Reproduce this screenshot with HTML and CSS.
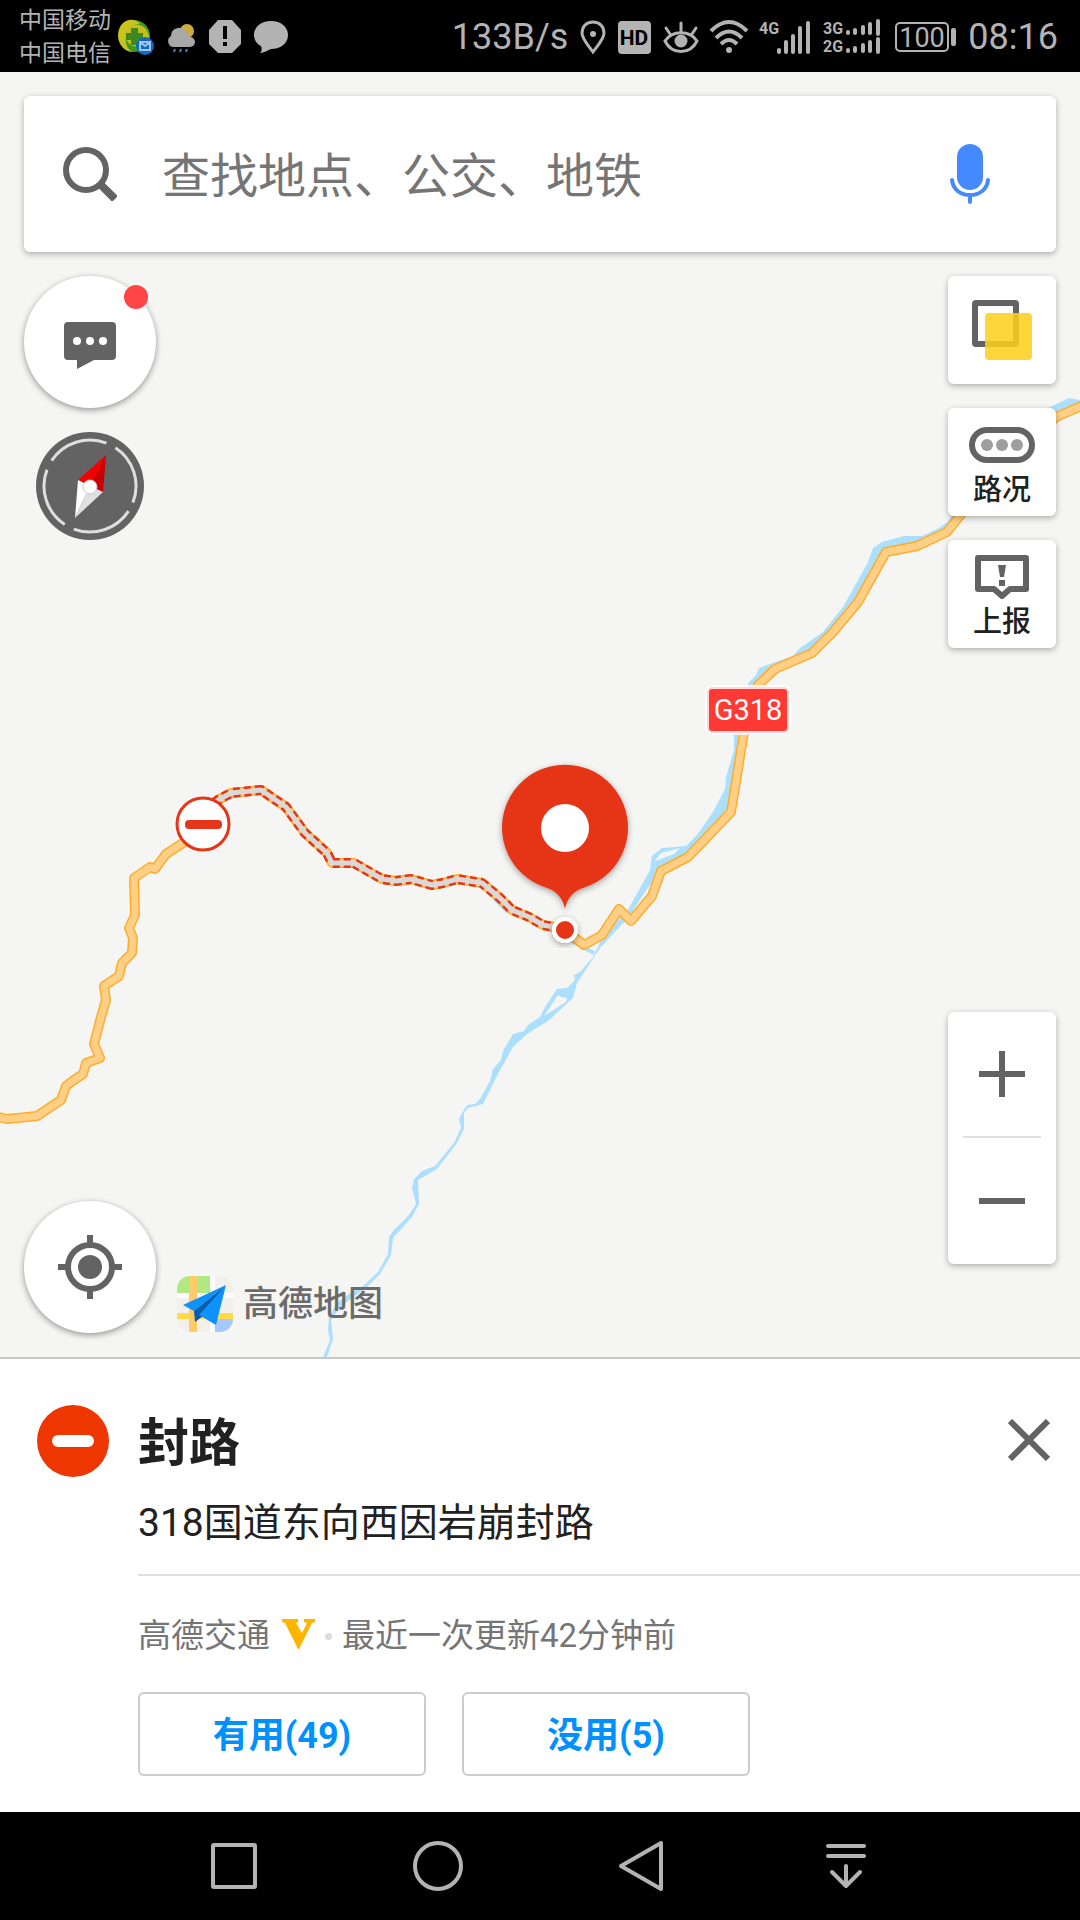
FILE: index.html
```
<!DOCTYPE html>
<html lang="zh-CN">
<head>
<meta charset="utf-8">
<meta name="viewport" content="width=device-width, initial-scale=1">
<title>高德地图</title>
<link rel="stylesheet" href="styles.css">
</head>
<body>
<header class="status">
  <div class="carriers"><span>中国移动</span><span>中国电信</span></div>
  <div class="notices">
    <svg width="36" height="36" viewBox="0 0 36 36">
      <circle cx="16" cy="17" r="16" fill="#3f9a22"/>
      <path d="M2 8C7-1 17-1 22 5C14 4 6 12 8 24C9 29 12 32 15 33C3 33-3 18 2 8Z" fill="#c9c41c"/>
      <path d="M10 8C20 2 30 8 31 18C30 26 22 30 13 26C6 21 5 13 10 8Z" fill="#c6bd20"/>
      <path d="M13 9h7v5h5v7h-5v5h-7v-5H8v-7h5Z" fill="#3a8a20"/>
      <circle cx="27" cy="27" r="9" fill="#1468c0"/>
      <path d="M22 23h10v8H22ZM22 23l5 4 5-4" fill="none" stroke="#9cc6f0" stroke-width="2"/>
    </svg>
    <svg width="30" height="36" viewBox="0 0 30 36">
      <circle cx="21" cy="12" r="7" fill="#cfac3a"/>
      <path d="M7 28a6 6 0 0 1-2-11a8 8 0 0 1 15-4a6 6 0 0 1 4 5a5 5 0 0 1 0 10Z" fill="#a8a8a8"/>
      <path d="M9 30l-1 3M15 30l-1 3M21 30l-1 3" stroke="#3a8fb0" stroke-width="2"/>
    </svg>
    <svg width="34" height="36" viewBox="0 0 34 36">
      <path d="M10 1h14l9 10v14l-9 9H10L1 25V11Z" fill="#b3b3b3"/>
      <path d="M15 7h4v13h-4ZM15 23h4v4h-4Z" fill="#000"/>
    </svg>
    <svg width="34" height="36" viewBox="0 0 34 36">
      <path d="M17 2C27 2 34 8 34 16S27 30 17 30C14 31 10 34 6 34C8 32 8 30 7 27C3 25 0 21 0 16C0 8 7 2 17 2Z" fill="#b3b3b3"/>
    </svg>
  </div>
  <div class="indicators">
    <span class="clock">133B/s</span>
    <svg width="26" height="36" viewBox="0 0 26 36"><path d="M13 3C6 3 2 8 2 14C2 20 8 26 13 33C18 26 24 20 24 14C24 8 20 3 13 3Z" fill="none" stroke="#b3b3b3" stroke-width="3"/><circle cx="13" cy="15" r="3" fill="#b3b3b3"/></svg>
    <svg width="33" height="36" viewBox="0 0 33 36"><rect y="2" width="33" height="33" rx="4" fill="#b3b3b3"/><text x="16" y="26" class="hd">HD</text></svg>
    <svg width="36" height="36" viewBox="0 0 36 36" fill="none" stroke="#b3b3b3" stroke-width="3" stroke-linecap="round"><path d="M2 22C9 11 27 11 34 22C27 36 9 36 2 22ZM18 4v8M3 9l4 6M33 9l-4 6"/><circle cx="18" cy="22" r="5" fill="#b3b3b3"/></svg>
    <svg width="36" height="36" viewBox="0 0 36 36" fill="none" stroke="#b3b3b3" stroke-width="4"><path d="M0 12Q18-6 36 12M5 19Q18 6 31 19M10 25Q18 17 26 25"/><circle cx="18" cy="31" r="3" fill="#b3b3b3" stroke="none"/></svg>
    <svg width="52" height="36" viewBox="0 0 52 36"><text y="15" class="net">4G</text><path d="M20 31v2M27 23v10M34 17v16M41 9v24M49 4v29" stroke="#b3b3b3" stroke-width="4" stroke-linecap="round"/></svg>
    <svg width="60" height="36" viewBox="0 0 60 36"><text y="15" class="net">3G</text><text y="33" class="net">2G</text><path d="M25 13v1M32 11v3M40 8v6M47 5v9M55 2v13M25 31v1M32 29v3M40 26v6M47 23v9M55 20v13" stroke="#b3b3b3" stroke-width="4" stroke-linecap="round"/></svg>
    <svg width="61" height="36" viewBox="0 0 61 36"><rect x="1" y="4" width="52" height="28" rx="4" fill="none" stroke="#b3b3b3" stroke-width="2"/><rect x="56" y="9" width="5" height="18" rx="2" fill="#b3b3b3"/><text x="27" y="28" class="charge">100</text></svg>
    <time class="clock">08:16</time>
  </div>
</header>

<main class="map">
  <svg class="canvas" viewBox="0 72 1080 1285" preserveAspectRatio="xMidYMid slice">
    <defs>
      <filter id="lift" x="-30%" y="-30%" width="160%" height="160%"><feDropShadow dx="0" dy="2" stdDeviation="3" flood-opacity=".35"/></filter>
      <path id="west" d="M-6 1116L7 1119L37 1116L61 1100L66 1086L74 1080L83 1074L86 1063L100 1058L94 1044L101 1017L106 1000L104 986L119 976L122 963L132 953L133 938L129 928L135 915L134 878L150 867L155 869L166 854L186 841L218 800"/>
      <path id="closed" d="M214 803L218 800L231 793L261 790L286 807L305 833L327 853L332 863L354 863L382 879L396 881L411 879L432 885L443 883L457 879L482 883L500 898L512 910L529 917L543 925L564 929"/>
      <path id="east" d="M564 929L584 945L602 935L619 909L631 921L652 896L661 871L688 857L731 812L744 732L758 685L775 669L812 653L833 632L858 602L886 552L917 546L947 532L967 507L1056 417L1086 404"/>
    </defs>
    <g fill="#acdffe">
      <path d="M1048 408L1069 398L1080 400V412L1050 420Z"/>
      <path d="M955 512L947 522L939 528L922 536L904 536L882 542L873 548L868 562L843 607L823 632L800 648L793 656L767 665L759 668L756 675L748 683L750 700L734 732V750L726 777L725 789L713 812L697 835L686 846L662 848L652 856L650 870L629 908L603 936L593 957L580 972L574 975L575 980L567 988L557 989L545 1007L540 1017L528 1025L524 1031L513 1034L503 1051L501 1060L493 1069L490 1081L480 1099L475 1104L467 1105L462 1113L459 1119L461 1128L454 1143L435 1166L422 1171L414 1179L412 1188L416 1204L408 1216L393 1231L389 1237L388 1254L378 1272L363 1286L350 1293L337 1303L329 1317L328 1330L330 1340L323 1357H327L333 1339L331 1320L340 1307L367 1287L380 1274L391 1255L393 1238L412 1217L419 1204L418 1180L437 1169L457 1143L464 1129L464 1113L468 1108L483 1104L499 1072L503 1065L513 1047L527 1034L548 1021L573 998L577 983L600 948L628 918L645 892L661 871L688 857L731 812L744 732L758 685L775 669L812 653L833 632L858 602L886 552L917 546L947 532Z"/>
    </g>
    <path d="M654 862L661 853L680 848L674 854L653 862ZM544 1016L558 995L561 997L567 998L566 1002Z" fill="#f5f6f4"/>
    <path d="M398 883L411 883M494 898L508 912M566 938L594 953" fill="none" stroke="#acdffe" stroke-width="4"/>
    <g fill="none" stroke-linejoin="round">
      <g stroke="#ffac2c" stroke-width="10"><use href="#west"/><use href="#closed"/><use href="#east"/></g>
      <g stroke="#ffcf86" stroke-width="7"><use href="#west"/><use href="#closed"/><use href="#east"/></g>
      <use href="#closed" stroke="#e63519" stroke-width="10" stroke-dasharray="7 4"/>
      <use href="#closed" stroke="#d9d9d9" stroke-width="5"/>
    </g>
    <circle cx="203" cy="824" r="26" fill="#fff" stroke="#e63519" stroke-width="3"/>
    <rect x="185" y="820" width="37" height="9" rx="4" fill="#e63519"/>
    <path filter="url(#lift)" fill="#e63519" d="M565 909C563 898 556 891 547 888A63 63 0 1 1 583 888C574 891 567 898 565 909Z"/>
    <circle cx="565" cy="828" r="24" fill="#fff"/>
    <circle cx="565" cy="930" r="11" fill="#e63519" stroke="#fff" stroke-width="4" filter="url(#lift)"/>
    <rect x="707" y="687" width="82" height="46" rx="5" fill="#ff3a34" stroke="#fff" stroke-opacity=".8" stroke-width="4"/>
    <text x="748" y="720" class="route">G318</text>
  </svg>

  <div class="overlay">
    <form class="search">
      <svg width="54" height="54" viewBox="0 0 54 54" fill="none" stroke="#636363"><circle cx="23" cy="23" r="20" stroke-width="6"/><path d="M38 38L52 52" stroke-width="8"/></svg>
      <input type="text" aria-label="查找地点" placeholder="查找地点、公交、地铁">
      <button type="button" class="plain" aria-label="语音"><svg width="42" height="60" viewBox="0 0 42 60"><rect x="8" width="26" height="46" rx="13" fill="#4489ff"/><path d="M3 36C4 46 12 51 21 51S38 46 39 36M21 51V58" fill="none" stroke="#4489ff" stroke-width="4" stroke-linecap="round"/></svg></button>
    </form>

    <div class="tools">
      <div class="stack">
        <button type="button" class="round" aria-label="消息">
          <svg width="54" height="56" viewBox="0 -8 54 56"><path d="M5 0H49a4 4 0 0 1 4 4V34a4 4 0 0 1-4 4H31L14 47V38H5a4 4 0 0 1-4-4V4a4 4 0 0 1 4-4Z" fill="#636363"/><g fill="#fff"><circle cx="14" cy="19" r="4"/><circle cx="27" cy="19" r="4"/><circle cx="40" cy="19" r="4"/></g></svg>
          <span class="badge"></span>
        </button>
        <button type="button" class="plain" aria-label="指南针">
          <svg width="108" height="108" viewBox="0 0 108 108"><circle cx="54" cy="54" r="54" fill="#636363"/><g transform="rotate(27 54 54)"><circle cx="54" cy="54" r="46" fill="none" stroke="#dedede" stroke-width="3" stroke-dasharray="62 10.26" stroke-dashoffset="-5"/></g><path d="M70 23L42 48L54 54Z" fill="#f40000"/><path d="M70 23L67 60L54 54Z" fill="#cc0000"/><path d="M42 48L39 86L54 54Z" fill="#fff"/><path d="M67 60L39 86L54 54Z" fill="#e0e0e0"/><circle cx="54" cy="55" r="7" fill="#fff" stroke="#ccc" stroke-width="1"/></svg>
        </button>
      </div>
      <div class="stack">
        <button type="button" class="tile" aria-label="图层"><svg width="60" height="60" viewBox="0 0 60 60"><rect x="3" y="3" width="41" height="41" rx="1" fill="none" stroke="#636363" stroke-width="6" stroke-linejoin="round"/><rect x="13" y="13" width="47" height="47" rx="4" fill="#fdcf1c" fill-opacity=".86"/></svg></button>
        <button type="button" class="tile labelled"><svg width="66" height="45" viewBox="0 -4 66 45"><rect x="3" y="3" width="60" height="30" rx="15" fill="none" stroke="#636363" stroke-width="6"/><g fill="#9e9e9e"><circle cx="18" cy="18" r="6"/><circle cx="33" cy="18" r="6"/><circle cx="48" cy="18" r="6"/></g></svg><span>路况</span></button>
        <button type="button" class="tile labelled"><svg width="54" height="45" viewBox="0 0 54 45"><path d="M3 3H51V34H35L27 41L19 34H3Z" fill="none" stroke="#636363" stroke-width="6" stroke-linejoin="round"/><path d="M23 10h8l-2 12h-4ZM24 25h6v6h-6Z" fill="#636363"/></svg><span>上报</span></button>
      </div>
    </div>

    <div class="dock">
      <button type="button" class="round" aria-label="定位"><svg width="64" height="64" viewBox="0 0 64 64"><circle cx="32" cy="32" r="22" fill="none" stroke="#636363" stroke-width="6"/><circle cx="32" cy="32" r="12" fill="#636363"/><path d="M32 0V10M32 54V64M0 32H10M54 32H64" stroke="#636363" stroke-width="6"/></svg></button>
      <div class="brand">
        <svg width="56" height="56" viewBox="0 0 56 56"><defs><clipPath id="tile"><rect width="56" height="56" rx="13"/></clipPath></defs><g clip-path="url(#tile)"><path d="M0 0H56V56H0Z" fill="#f2f0eb"/><path d="M0 0H33V17H0Z" fill="#b0e882"/><path d="M38 43H56V56H38Z" fill="#a5c8ff"/><path d="M0 17H56V22H0ZM33 0H38V56H33Z" fill="#fff"/><path d="M0 37H56V43H0Z" fill="#ffdc46"/><path d="M12 0H20V56H12Z" fill="#ffcb69"/></g><path d="M49 9L6 29L17 35Z" fill="#0d92ff"/><path d="M49 9L17 35L18 46Z" fill="#065fae"/><path d="M49 9L22 39L18 46L26 40Z" fill="#0a55a0"/><path d="M49 9L22 39L39 49Z" fill="#0d92ff"/></svg>
        <span>高德地图</span>
      </div>
      <div class="zoom">
        <button type="button" aria-label="放大"><svg width="46" height="46" viewBox="0 0 46 46"><path d="M0 23H46M23 0V46" stroke="#636363" stroke-width="6"/></svg></button>
        <button type="button" aria-label="缩小"><svg width="46" height="46" viewBox="0 0 46 46"><path d="M0 23H46" stroke="#636363" stroke-width="6"/></svg></button>
      </div>
    </div>
  </div>
</main>

<section class="panel">
  <div class="sign"><svg width="72" height="72" viewBox="0 0 72 72"><circle cx="36" cy="36" r="36" fill="#ed3600"/><rect x="15" y="30" width="42" height="12" rx="6" fill="#fff"/></svg></div>
  <div class="details">
    <div class="heading">
      <h1>封路</h1>
      <button type="button" class="plain" aria-label="关闭"><svg width="42" height="42" viewBox="0 0 42 42"><path d="M2 2L40 40M40 2L2 40" stroke="#636363" stroke-width="6"/></svg></button>
    </div>
    <p class="summary">318国道东向西因岩崩封路</p>
    <div class="source">
      <span>高德交通</span>
      <svg width="33" height="34" viewBox="0 0 33 34"><path d="M0 0H16V3L14 4L20 14L25 4L22 3V0H33V3L30 4L17 30H16L3 4L0 3Z" fill="#ffb400"/></svg>
      <i class="dot"></i>
      <span>最近一次更新42分钟前</span>
    </div>
    <div class="votes"><button type="button">有用(49)</button><button type="button">没用(5)</button></div>
  </div>
</section>

<nav class="system">
  <button type="button" class="plain" aria-label="最近任务"><svg width="54" height="54" viewBox="0 0 54 54"><rect x="6" y="6" width="42" height="42" rx="1"/></svg></button>
  <button type="button" class="plain" aria-label="主页"><svg width="54" height="54" viewBox="0 0 54 54"><circle cx="27" cy="27" r="23"/></svg></button>
  <button type="button" class="plain" aria-label="返回"><svg width="54" height="54" viewBox="0 0 54 54"><path d="M46 4V50L6 27Z"/></svg></button>
  <button type="button" class="plain" aria-label="通知栏"><svg width="54" height="54" viewBox="0 0 54 54" stroke-linecap="round"><path d="M9 7H45M9 17H45M27 27V47M13 33L27 47L41 33"/></svg></button>
</nav>
</body>
</html>
```
FILE: styles.css
```
* { box-sizing: border-box; }

body {
  margin: 0;
  min-height: 100vh;
  display: flex;
  flex-direction: column;
  background: #fff;
  color: #212121;
  font-family: Roboto, "Noto Sans CJK SC", sans-serif;
}

button { font: inherit; color: inherit; cursor: pointer; }
svg { display: block; flex: none; }

.plain { padding: 0; border: 0; background: none; }

.status {
  display: flex;
  align-items: center;
  min-height: 72px;
  padding: 2px 22px 0 19px;
  background: #000;
  color: #b3b3b3;
}
.status svg { overflow: visible; }
.carriers { display: grid; font-size: 23px; line-height: 33px; }
.notices { display: flex; gap: 12px; margin-left: 7px; }
.indicators { display: flex; align-items: center; gap: 12px; margin-left: auto; }
.clock { font-size: 36px; line-height: 40px; }
.hd { font-size: 21px; font-weight: 700; text-anchor: middle; fill: #000; }
.net { font-size: 16px; font-weight: 700; fill: #b3b3b3; }
.charge { font-size: 27px; text-anchor: middle; fill: #b3b3b3; }

.map {
  position: relative;
  flex: 1;
  display: flex;
  background: #f5f6f4;
}
.canvas { position: absolute; inset: 0; width: 100%; height: 100%; }
.route { font-size: 29px; text-anchor: middle; fill: #fff; }

.overlay {
  position: relative;
  flex: 1;
  display: flex;
  flex-direction: column;
  gap: 24px;
  padding: 24px;
}

.search {
  display: flex;
  align-items: center;
  height: 156px;
  padding: 0 65px 0 39px;
  background: #fff;
  border-radius: 6px;
  box-shadow: 0 2px 6px rgba(0, 0, 0, .3);
}
.search input {
  flex: 1;
  min-width: 0;
  margin: 0 24px 0 45px;
  padding: 6px 0 0;
  border: 0;
  outline: 0;
  background: none;
  font: 48px/72px Roboto, "Noto Sans CJK SC", sans-serif;
}
.search input::placeholder { color: #757575; opacity: 1; }

.tools { display: flex; justify-content: space-between; }
.stack { display: flex; flex-direction: column; align-items: center; gap: 24px; }

.round {
  position: relative;
  display: grid;
  place-items: center;
  width: 132px;
  height: 132px;
  padding: 0;
  border: 0;
  border-radius: 50%;
  background: #fff;
  box-shadow: 0 2px 6px rgba(0, 0, 0, .4);
}
.badge {
  position: absolute;
  top: 9px;
  right: 8px;
  width: 24px;
  height: 24px;
  border-radius: 50%;
  background: #ff4545;
}

.tile {
  display: flex;
  flex-direction: column;
  align-items: center;
  justify-content: center;
  width: 108px;
  height: 108px;
  padding: 0;
  border: 0;
  border-radius: 6px;
  background: #fff;
  box-shadow: 0 2px 6px rgba(0, 0, 0, .3);
  font-size: 29px;
  font-weight: 500;
  line-height: 32px;
}
.labelled { justify-content: flex-start; gap: 6px; padding-top: 15px; }

.dock { display: flex; align-items: flex-end; margin-top: auto; }
.brand {
  display: flex;
  align-items: center;
  gap: 10px;
  margin-left: 21px;
  color: #6b6b6b;
  font-size: 35px;
  font-weight: 500;
  line-height: 56px;
}
.brand span { padding-top: 2px; }
.zoom {
  display: grid;
  width: 108px;
  margin: 0 0 69px auto;
  border-radius: 6px;
  background: #fff;
  box-shadow: 0 2px 6px rgba(0, 0, 0, .3);
}
.zoom button {
  display: grid;
  place-items: center;
  height: 126px;
  margin: 0 15px;
  padding: 0;
  border: 0;
  background: none;
}
.zoom button:first-child { border-bottom: 2px solid #e0e0e0; }

.panel {
  display: grid;
  grid-template-columns: 138px 1fr;
  border-top: 2px solid #c8c8c8;
  padding: 46px 0 36px;
}
.sign { padding-left: 37px; }
.heading {
  display: flex;
  align-items: center;
  justify-content: space-between;
  height: 70px;
  padding-right: 30px;
}
h1 { margin: 0; padding-top: 8px; font-size: 51px; line-height: 60px; }
.summary {
  margin: 0;
  padding: 24px 0 27px;
  border-bottom: 2px solid #e0e0e0;
  font-size: 39px;
  line-height: 48px;
}
.source {
  display: flex;
  align-items: center;
  margin: 36px 0 32px;
  color: #757575;
  font-size: 33px;
  line-height: 48px;
}
.source svg { margin: 0 10px 0 12px; }
.dot { width: 7px; height: 7px; margin-right: 10px; border-radius: 50%; background: #dcdcdc; }
.votes { display: flex; gap: 36px; }
.votes button {
  width: 288px;
  height: 84px;
  padding: 0 0 4px;
  border: 2px solid #ccc;
  border-radius: 6px;
  background: #fff;
  color: #0091ff;
  font-size: 36px;
  font-weight: 700;
}

.system {
  display: grid;
  grid-template-columns: repeat(4, 204px);
  justify-content: center;
  height: 108px;
  background: #000;
}
.system button { display: grid; place-items: center; }
.system svg { fill: none; stroke: #b3b3b3; stroke-width: 4; stroke-linejoin: round; }
```
